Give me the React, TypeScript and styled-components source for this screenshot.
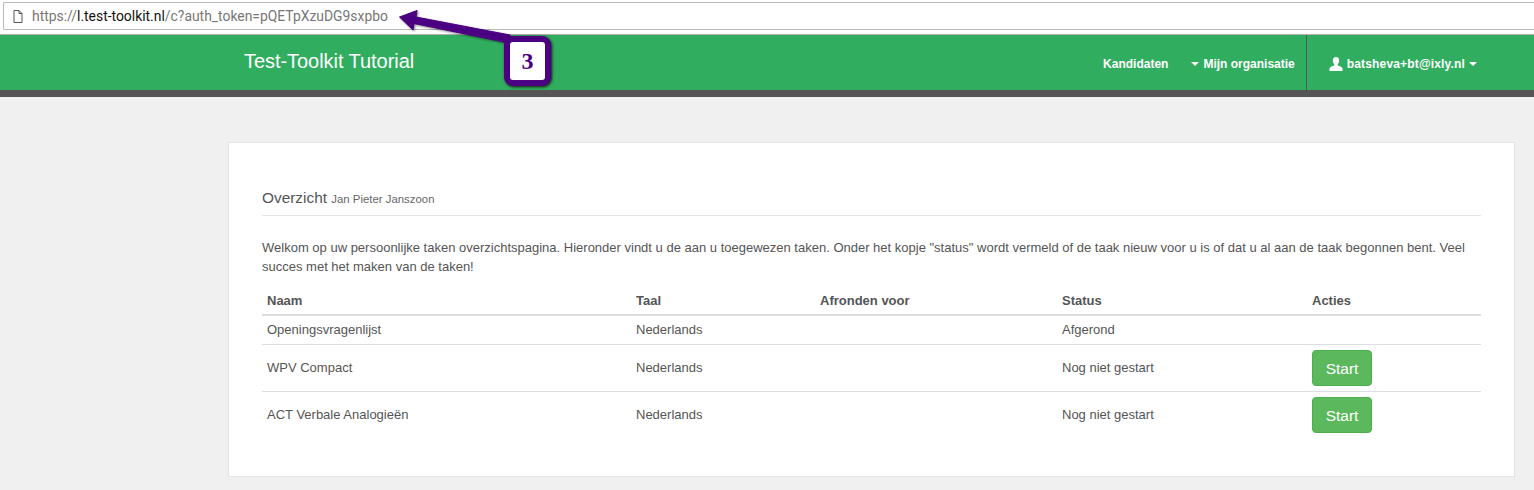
import React from 'react';
import styled, { createGlobalStyle } from 'styled-components';

const rows = [
  { name: 'Openingsvragenlijst', lang: 'Nederlands', status: 'Afgerond', canStart: false },
  { name: 'WPV Compact', lang: 'Nederlands', status: 'Nog niet gestart', canStart: true },
  { name: 'ACT Verbale Analogieën', lang: 'Nederlands', status: 'Nog niet gestart', canStart: true },
];

const App = () => (
  <Page>
    <GlobalStyle />
    <BrowserBar>
      <UrlBox>
        <svg width="10" height="13" viewBox="0 0 10 13" fill="none" stroke="#555" strokeWidth="1">
          <path d="M1 .5h5l3 3v9H1z M6 .5v3h3" />
        </svg>
        <Url>
          https://<b>l.test-toolkit.nl</b>/c?auth_token=pQETpXzuDG9sxpbo
        </Url>
      </UrlBox>
    </BrowserBar>

    <Nav>
      <Brand>Test-Toolkit Tutorial</Brand>
      <NavRight>
        <NavLink>Kandidaten</NavLink>
        <OrgLink>
          <Caret />
          Mijn organisatie
        </OrgLink>
        <UserLink>
          <svg width="14" height="14" viewBox="0 0 14 14" fill="#fff">
            <path d="M7 0C4.9 0 3.8 1.500 3.800 3.600c0 1.500.6 2.800 1.500 3.600.2.500.1 1-.3 1.300C3.700 9.300 1 9.700.5 11.300V14h13v-2.700c-.5-1.600-3.200-2-4.500-2.800-.4-.3-.5-.8-.3-1.300.9-.8 1.500-2.100 1.500-3.600C10.200 1.500 9.100 0 7 0z" />
          </svg>
          <Email>batsheva+bt@ixly.nl</Email>
          <Caret />
        </UserLink>
      </NavRight>
    </Nav>

    <Content>
      <Card>
        <Heading>
          Overzicht <small>Jan Pieter Janszoon</small>
        </Heading>
        <Intro>
          Welkom op uw persoonlijke taken overzichtspagina. Hieronder vindt u de aan u toegewezen taken. Onder het
          kopje "status" wordt vermeld of de taak nieuw voor u is of dat u al aan de taak begonnen bent. Veel succes
          met het maken van de taken!
        </Intro>
        <Table>
          <colgroup>
            <col style={{ width: 369 }} />
            <col style={{ width: 184 }} />
            <col style={{ width: 242 }} />
            <col style={{ width: 250 }} />
            <col />
          </colgroup>
          <thead>
            <tr>
              <Th>Naam</Th>
              <Th>Taal</Th>
              <Th>Afronden voor</Th>
              <Th>Status</Th>
              <Th>Acties</Th>
            </tr>
          </thead>
          <tbody>
            {rows.map((row) => (
              <tr key={row.name}>
                <Td>{row.name}</Td>
                <Td>{row.lang}</Td>
                <Td />
                <Td>{row.status}</Td>
                <Td>{row.canStart && <StartButton>Start</StartButton>}</Td>
              </tr>
            ))}
          </tbody>
        </Table>
      </Card>
    </Content>

    <Arrow width="125" height="42" viewBox="0 0 125 42">
      <path d="M.5 7 L18 .5 L17 7 L111 25 L110 33 L15 13.500 L14 20 Z" fill="#4b0082" stroke="#4b0082" strokeWidth="1" strokeLinejoin="round" />
    </Arrow>
    <Badge>3</Badge>
  </Page>
);

export default App;

const GlobalStyle = createGlobalStyle`
  html, body {
    margin: 0;
    padding: 0;
    background: #f0f0f0;
  }
`;

const Page = styled.div`
  position: relative;
  width: 1534px;
  height: 490px;
  overflow: hidden;
  font-family: 'Liberation Sans', Arial, sans-serif;
  font-size: 14px;
  color: #555;
`;

const BrowserBar = styled.div`
  height: 35px;
  padding: 2px 0 0 3px;
  box-sizing: border-box;
  background: #fff;
  border-bottom: 1px solid #b0b0b0;
`;

const UrlBox = styled.div`
  display: flex;
  align-items: center;
  gap: 9px;
  height: 28px;
  box-sizing: border-box;
  padding-left: 9px;
  background: #fff;
  border: 1px solid #b8b8b8;
  border-right: 0;
  border-radius: 2px 0 0 2px;
`;

const Url = styled.span`
  font-family: Roboto, 'Liberation Sans', sans-serif;
  font-size: 13.900px;
  color: #777;

  b {
    font-weight: 400;
    color: #111;
  }
`;

const Nav = styled.nav`
  display: flex;
  justify-content: space-between;
  height: 55px;
  padding: 0 57px 0 244px;
  background: #31ad5f;
  border-bottom: 7px solid #555;
`;

const Brand = styled.div`
  padding-top: 13px;
  font-size: 20px;
  line-height: 26px;
  letter-spacing: -0.05px;
  color: #fff;
`;

const NavRight = styled.div`
  display: flex;
  align-items: stretch;
  font-size: 12px;
  font-weight: 700;
  color: #fff;
`;

const NavLink = styled.div`
  display: flex;
  align-items: center;
  margin-right: 23px;
  padding-top: 2px;
`;

const OrgLink = styled(NavLink)`
  margin-right: 0;
  padding-right: 11px;
  gap: 4px;
`;

const UserLink = styled(NavLink)`
  margin: 0;
  height: 53px;
  padding-left: 22px;
  gap: 4px;
  border-left: 1px solid #555;
`;

const Email = styled.span`
  letter-spacing: 0.16px;
`;

const Caret = styled.span`
  display: inline-block;
  width: 0;
  height: 0;
  border-top: 4px solid #fff;
  border-left: 4px solid transparent;
  border-right: 4px solid transparent;
`;

const Content = styled.main`
  padding: 45px 19px 0 228px;
`;

const Card = styled.section`
  height: 335px;
  box-sizing: border-box;
  padding: 46px 33px 0;
  background: #fff;
  border: 1px solid #e3e3e3;
`;

const Heading = styled.h1`
  margin: 0 0 22px;
  padding-bottom: 9px;
  height: 17px;
  box-sizing: content-box;
  font-size: 15.400px;
  font-weight: 400;
  line-height: 17px;
  color: #555;
  border-bottom: 1px solid #e5e5e5;

  small {
    font-size: 11.400px;
    color: #666;
  }
`;

const Intro = styled.p`
  margin: 0 0 11px;
  font-size: 13px;
  line-height: 19px;
`;

const Table = styled.table`
  width: 100%;
  table-layout: fixed;
  border-collapse: collapse;
  font-size: 13px;
`;

const Th = styled.th`
  height: 28px;
  padding: 0 5px;
  box-sizing: border-box;
  text-align: left;
  font-weight: 700;
  border-bottom: 2px solid #ddd;
`;

const Td = styled.td`
  padding: 5px;
  line-height: 18px;
  border-top: 1px solid #ddd;

  tr:first-child > & {
    border-top: 0;
  }
`;

const StartButton = styled.button`
  display: block;
  width: 60px;
  height: 36px;
  padding: 1px 0 0;
  font-family: inherit;
  font-size: 15.500px;
  color: #fff;
  background: #5cb85c;
  border: 1px solid #4cae4c;
  border-radius: 4px;
`;

const Arrow = styled.svg`
  position: absolute;
  left: 399px;
  top: 10px;
  filter: drop-shadow(1px 1px 1px rgba(0, 0, 0, 0.5));
`;

const Badge = styled.div`
  position: absolute;
  left: 504px;
  top: 36px;
  width: 47px;
  height: 50px;
  box-sizing: border-box;
  display: flex;
  align-items: center;
  justify-content: center;
  font-family: 'Liberation Serif', serif;
  font-size: 24px;
  font-weight: 700;
  color: #4b0082;
  background: #fff;
  border: 6px solid #4b0082;
  border-radius: 9px;
  box-shadow: 1px 1px 3px #111;
`;
